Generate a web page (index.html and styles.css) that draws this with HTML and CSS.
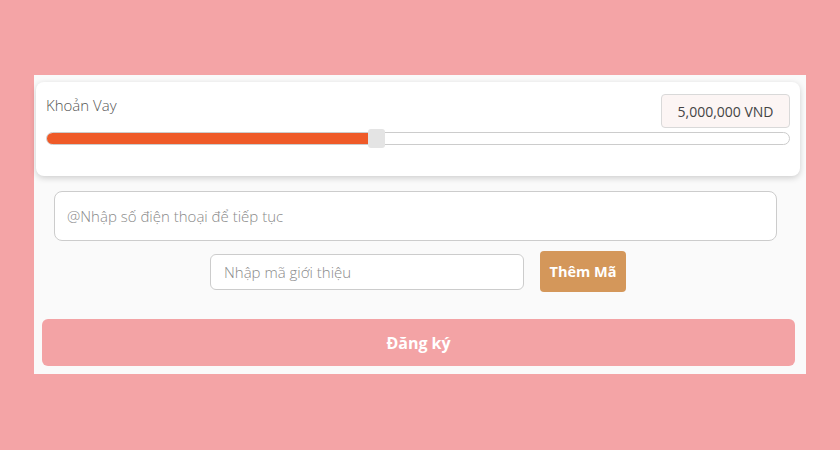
FILE: index.html
```html
<!DOCTYPE html>
<html lang="vi">
<head>
    <meta charset="UTF-8">
    <meta name="viewport" content="width=device-width, initial-scale=1.0">
    <title>Đăng ký khoản vay</title>
    <link rel="stylesheet" href="styles.css">
</head>
<body>
    <div class="panel">
        <!-- Loan amount -->
        <div class="loan-card">
            <div class="loan-head">
                <span class="loan-label">Khoản Vay</span>
                <div class="loan-value">5,000,000 VND</div>
            </div>
            <div class="slider">
                <div class="slider-fill" style="width: 43.8%"></div>
                <div class="slider-thumb"></div>
            </div>
        </div>

        <input type="text" class="phone-input" placeholder="@Nhập số điện thoại để tiếp tục">

        <div class="referral-row">
            <input type="text" class="referral-input" placeholder="Nhập mã giới thiệu">
            <button class="add-code">Thêm Mã</button>
        </div>

        <button class="register">Đăng ký</button>
    </div>
</body>
</html>
```

FILE: styles.css
```css
* {
    margin: 0;
    padding: 0;
    box-sizing: border-box;
}

body {
    font-family: "Open Sans", Lato, sans-serif;
    background-color: #f4a4a6;
    padding: 75px 34px;
}

.panel {
    width: 772px;
    background-color: #fafafa;
    padding: 7px 0 8px 0;
    display: flex;
    flex-direction: column;
}

.loan-card {
    margin: 0 6px 0 2px;
    background-color: #ffffff;
    border-radius: 8px;
    box-shadow: 0 2px 6px rgba(0, 0, 0, 0.18);
    padding: 12px 10px 31px 10px;
}

.loan-head {
    display: flex;
    justify-content: space-between;
    align-items: flex-start;
}

.loan-label {
    font-size: 15px;
    font-weight: 300;
    color: #555;
    margin-top: 1px;
}

.loan-value {
    width: 129px;
    height: 34px;
    border: 1px solid #d9d9d9;
    border-radius: 4px;
    background-color: #fcf5f4;
    font-size: 14px;
    color: #444;
    display: flex;
    align-items: center;
    justify-content: center;
}

.slider {
    margin-top: 4px;
    height: 13px;
    border: 1px solid #cccccc;
    border-radius: 7px;
    display: flex;
    align-items: center;
}

.slider-fill {
    height: 11px;
    background-color: #ef5a28;
    border-radius: 6px 0 0 6px;
}

.slider-thumb {
    width: 17px;
    height: 19px;
    margin-left: -4px;
    background-color: #e4e4e4;
    border-radius: 3px;
    flex-shrink: 0;
}

input {
    font-family: inherit;
    background-color: #ffffff;
    border: 1px solid #cccccc;
    outline: none;
}

input::placeholder {
    color: #8a8a8a;
    font-weight: 300;
}

.phone-input {
    margin: 15px 29px 0 20px;
    height: 50px;
    border-radius: 8px;
    padding: 0 12px;
    font-size: 15px;
}

.referral-row {
    margin-top: 10px;
    display: flex;
    justify-content: center;
    align-items: center;
    gap: 16px;
    padding-right: 4px;
}

.referral-input {
    width: 314px;
    height: 36px;
    border-radius: 6px;
    padding: 0 13px;
    font-size: 15px;
}

button {
    font-family: inherit;
    border: none;
    color: #ffffff;
    font-weight: bold;
    cursor: pointer;
}

.add-code {
    width: 86px;
    height: 41px;
    background-color: #d4975a;
    border-radius: 4px;
    font-size: 14.5px;
}

.register {
    margin: 27px 11px 0 8px;
    height: 47px;
    background-color: #f3a3a5;
    border-radius: 6px;
    font-size: 16px;
}
```
